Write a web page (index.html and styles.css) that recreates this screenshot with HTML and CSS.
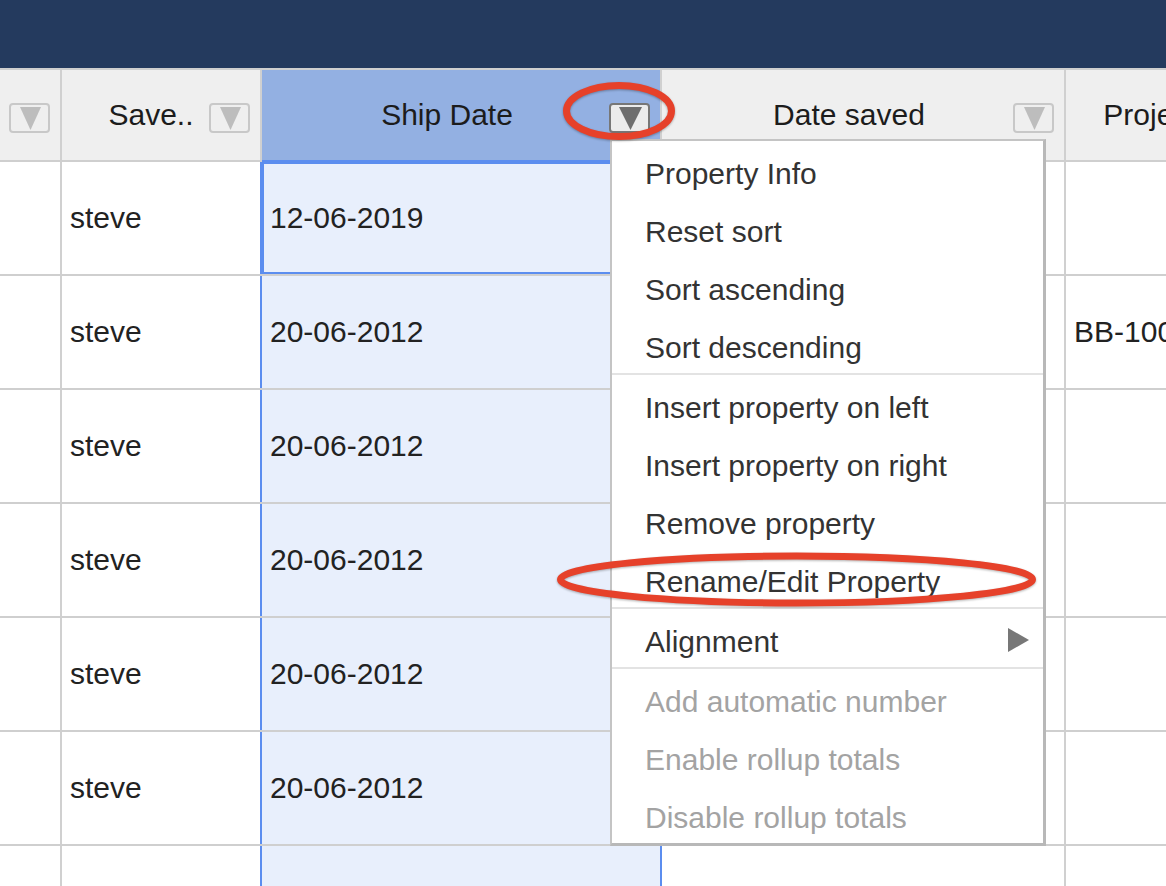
FILE: index.html
```html
<!DOCTYPE html>
<html>

<head>
    <meta charset="UTF-8">
    <title>Ship Date - column menu</title>
    <link rel="stylesheet" href="styles.css">
</head>

<body>
    <div class="topbar"></div>

    <div class="grid">
        <div class="row head">
            <div class="cell c1">
                <span class="dd"><svg viewBox="0 0 37 26"><polygon points="9,2 30,2 19.5,25" /></svg></span>
            </div>
            <div class="cell c2">
                <span class="label">Save..</span>
                <span class="dd"><svg viewBox="0 0 37 26"><polygon points="9,2 30,2 19.5,25" /></svg></span>
            </div>
            <div class="cell c3 ship">
                <span class="label">Ship Date</span>
                <span class="dd active"><svg viewBox="0 0 37 26"><polygon points="8,2 31,2 19.5,25" /></svg></span>
            </div>
            <div class="cell c4">
                <span class="label">Date saved</span>
                <span class="dd"><svg viewBox="0 0 37 26"><polygon points="9,2 30,2 19.5,25" /></svg></span>
            </div>
            <div class="cell c5">
                <span class="label">Project number</span>
            </div>
        </div>

        <div class="row">
            <div class="cell c1"></div>
            <div class="cell c2">steve</div>
            <div class="cell c3 ship sel">12-06-2019</div>
            <div class="cell c4"></div>
            <div class="cell c5"></div>
        </div>
        <div class="row">
            <div class="cell c1"></div>
            <div class="cell c2">steve</div>
            <div class="cell c3 ship">20-06-2012</div>
            <div class="cell c4"></div>
            <div class="cell c5">BB-1001</div>
        </div>
        <div class="row">
            <div class="cell c1"></div>
            <div class="cell c2">steve</div>
            <div class="cell c3 ship">20-06-2012</div>
            <div class="cell c4"></div>
            <div class="cell c5"></div>
        </div>
        <div class="row">
            <div class="cell c1"></div>
            <div class="cell c2">steve</div>
            <div class="cell c3 ship">20-06-2012</div>
            <div class="cell c4"></div>
            <div class="cell c5"></div>
        </div>
        <div class="row">
            <div class="cell c1"></div>
            <div class="cell c2">steve</div>
            <div class="cell c3 ship">20-06-2012</div>
            <div class="cell c4"></div>
            <div class="cell c5"></div>
        </div>
        <div class="row">
            <div class="cell c1"></div>
            <div class="cell c2">steve</div>
            <div class="cell c3 ship">20-06-2012</div>
            <div class="cell c4"></div>
            <div class="cell c5"></div>
        </div>
        <div class="row last">
            <div class="cell c1"></div>
            <div class="cell c2"></div>
            <div class="cell c3 ship"></div>
            <div class="cell c4"></div>
            <div class="cell c5"></div>
        </div>
    </div>

    <!-- column menu, opened from the Ship Date header -->
    <div class="menu">
        <div class="item">Property Info</div>
        <div class="item">Reset sort</div>
        <div class="item">Sort ascending</div>
        <div class="item">Sort descending</div>
        <div class="sep"></div>
        <div class="item">Insert property on left</div>
        <div class="item">Insert property on right</div>
        <div class="item">Remove property</div>
        <div class="item">Rename/Edit Property</div>
        <div class="sep"></div>
        <div class="item">Alignment
            <svg class="sub" viewBox="0 0 21 24"><polygon points="0,0 21,12 0,24" /></svg>
        </div>
        <div class="sep"></div>
        <div class="item off">Add automatic number</div>
        <div class="item off">Enable rollup totals</div>
        <div class="item off">Disable rollup totals</div>
    </div>

    <!-- red annotation rings -->
    <svg class="marks" viewBox="0 0 1166 886">
        <ellipse cx="619" cy="111" rx="52.5" ry="25.5" />
        <ellipse cx="796.5" cy="579.5" rx="236" ry="23.5" />
    </svg>
</body>

</html>
```

FILE: styles.css
```css
* {
    box-sizing: border-box;
}

html,
body {
    margin: 0;
    height: 100%;
    overflow: hidden;
    background: #fff;
    font-family: "Liberation Sans", Arial, sans-serif;
    color: #222;
}

.topbar {
    height: 68px;
    background: #243a5e;
}

.grid {
    width: 100%;
    overflow: hidden;
}

.row {
    display: flex;
    height: 114px;
    border-bottom: 2px solid #cfcfcf;
}

.row.head {
    height: 94px;
    border-top: 2px solid #cfcfcf;
    background: #efefef;
}

/* only the top of the last row shows */
.row.last {
    height: 40px;
    border-bottom: 0;
}

.cell {
    flex-shrink: 0;
    display: flex;
    align-items: center;
    padding-left: 8px;
    font-size: 30px;
    border-right: 2px solid #d0d0d0;
    position: relative;
    white-space: nowrap;
    overflow: hidden;
}

.c1 { width: 62px; }
.c2 { width: 200px; }
.c3 { width: 400px; }
.c4 { width: 404px; }
.c5 { width: 280px; }

/* header cells: centred label, dropdown button on the right */
.head .cell {
    justify-content: center;
    padding-left: 0;
    padding-right: 28px;
    color: #1c1c1c;
}

.head .c2 {
    padding-right: 20px;
}

.head .c5 {
    padding-right: 0;
    overflow: visible;
}

.head .ship {
    background: #93b0e2;
}

.dd {
    position: absolute;
    right: 10px;
    top: 33px;
    width: 41px;
    height: 30px;
    border: 2px solid #c8c8c8;
    border-radius: 4px;
    background: #efefef;
}

.dd svg {
    display: block;
    width: 37px;
    height: 26px;
    fill: #bdbdbd;
}

.dd.active {
    border-color: #777;
    background: #ececec;
}

.dd.active svg {
    fill: #6e6e6e;
}

/* Ship Date column is the selected one */
.row:not(.head) .c2 {
    border-right-color: #5b8def;
}

.row:not(.head) .ship {
    background: #e8effc;
    border-right-color: #5b8def;
}

.sel {
    z-index: 1;
    overflow: visible;
    box-shadow: inset 2px 0 0 #5b8def, inset 0 2px 0 #5b8def, inset 0 -2px 0 #5b8def, 0 -2px 0 #5b8def;
}

.menu {
    position: absolute;
    left: 610px;
    top: 139px;
    width: 436px;
    background: #fff;
    border-left: 2px solid #c4c4c4;
    border-top: 2px solid #c4c4c4;
    border-right: 3px solid #b8b8b8;
    border-bottom: 3px solid #b8b8b8;
    z-index: 5;
}

.item {
    display: flex;
    align-items: center;
    height: 58px;
    padding-top: 7px;
    padding-left: 33px;
    font-size: 30px;
    color: #333;
    white-space: nowrap;
}

.item.off {
    color: #a3a3a3;
}

.item .sub {
    width: 21px;
    height: 24px;
    margin-left: auto;
    margin-right: 14px;
    margin-top: -4px;
    fill: #777;
}

.sep {
    height: 2px;
    background: #e3e3e3;
}

.marks {
    position: absolute;
    left: 0;
    top: 0;
    width: 1166px;
    height: 886px;
    pointer-events: none;
    z-index: 10;
    filter: drop-shadow(0 1px 1px rgba(0, 0, 0, 0.3));
}

.marks ellipse {
    fill: none;
    stroke: #e6412a;
    stroke-width: 7;
}
```
